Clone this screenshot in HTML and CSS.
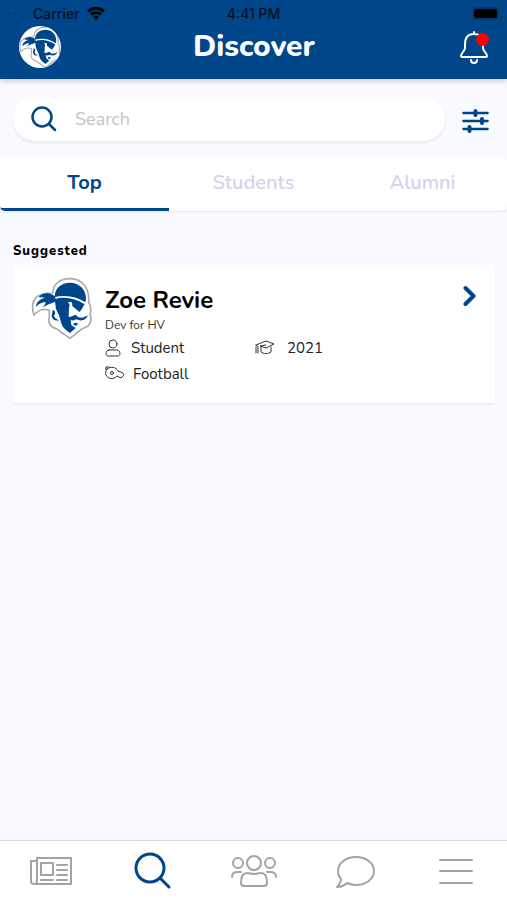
FILE: index.html
```
<!DOCTYPE html>
<html lang="en">
<head>
    <meta charset="UTF-8">
    <meta name="viewport" content="width=device-width, initial-scale=1.0">
    <title>Discover</title>
    <link rel="stylesheet" href="styles.css">
</head>
<body>
    <!-- Shared pirate logo -->
    <svg class="sprite" aria-hidden="true">
        <symbol id="pirate" viewBox="4 4 184 186">
            <path d="M12 118C4 96 8 76 16 68C26 54 50 52 68 52C70 24 92 8 122 9C154 10 174 32 176 66L176 80C184 92 184 104 180 116C186 132 182 148 168 154C156 158 146 166 138 174L120 188L100 174C90 168 86 162 76 158C58 154 54 136 58 124L58 104C40 98 24 104 12 118Z" fill="#fff" stroke="#a5abae" stroke-width="5"/>
            <path d="M74 64C74 37 94 21 120 21C148 21 168 42 168 68C168 72 167 76 166 80C138 62 108 57 74 64Z"/>
            <path d="M74 71C104 61 136 68 164 86L160 91C158 98 154 103 148 109L127 91L126 80L114 79L119 88L117 97L116 122L122 132L124 148L137 157L120 172C108 164 98 156 95 146L88 122L78 100Z"/>
            <path d="M75 62C58 49 38 50 26 64L46 66C30 69 18 80 18 94C30 81 40 80 48 80L38 97C52 84 64 86 78 76Z"/>
            <path d="M112 125C126 124 130 118 138 118C146 129 158 129 173 119C170 134 152 138 139 131C130 137 120 135 112 125Z"/>
            <path d="M68 103C76 105 78 114 72 120C74 128 80 130 87 134C73 138 62 127 66 116Z"/>
            <path d="M133 141L145 143L138 151L130 147Z"/>
        </symbol>
    </svg>

    <header class="header">
        <div class="status-bar">
            <div class="carrier">
                <span class="signal"><i></i><i></i><i></i><i></i></span>
                <span>Carrier</span>
                <svg class="wifi" viewBox="0 0 18 13" aria-hidden="true">
                    <path d="M1 4.500C5.500 0 12.500 0 17 4.500M4 7.500C7 5 11 5 14 7.500"/>
                    <path class="wifi-dot" d="M6 10C8 8 10 8 12 10L9 13Z"/>
                </svg>
            </div>
            <span>4:41 PM</span>
            <span class="battery"></span>
        </div>
        <div class="title-bar">
            <a class="logo" href="#" aria-label="Home"><svg><use href="#pirate"/></svg></a>
            <h1>Discover</h1>
            <button class="bell" aria-label="Notifications">
                <svg viewBox="0 0 30 34" aria-hidden="true">
                    <path d="M15 2V4M15 4C9 4 6 8 6 14V18C6 21 2 23 2 26C2 27 3 27 4 27H26C27 27 28 27 28 26C28 23 24 21 24 18V14C24 8 21 4 15 4ZM12 30C12 34 18 34 18 30"/>
                </svg>
                <span class="bell-badge"></span>
            </button>
        </div>
    </header>

    <main class="main">
        <div class="search-row">
            <label class="search-box">
                <svg viewBox="0 0 26 26" aria-hidden="true">
                    <circle cx="11" cy="11" r="9.500"/>
                    <path d="M18 18L24 24"/>
                </svg>
                <input type="text" placeholder="Search" aria-label="Search">
            </label>
            <button class="filter" aria-label="Filters">
                <svg viewBox="0 0 26 24" aria-hidden="true">
                    <path d="M1 4H25M1 12H25M1 20H25"/>
                    <path class="knobs" d="M13 2V6M19.500 10V14M7 18V22"/>
                </svg>
            </button>
        </div>

        <div class="tabs" role="tablist">
            <button class="tab active" role="tab" aria-selected="true">Top</button>
            <button class="tab" role="tab" aria-selected="false">Students</button>
            <button class="tab" role="tab" aria-selected="false">Alumni</button>
        </div>

        <section class="suggested">
            <h2>Suggested</h2>
            <article class="card">
                <svg class="avatar" aria-hidden="true"><use href="#pirate"/></svg>
                <div class="info">
                    <h3>Zoe Revie</h3>
                    <p class="role">Dev for HV</p>
                    <div class="facts">
                        <span class="fact">
                            <svg class="person" viewBox="0 0 16 18" aria-hidden="true">
                                <circle cx="8" cy="5" r="4"/>
                                <path d="M4 11H12C14 11 15 13 15 15C15 16 14 17 13 17H3C2 17 1 16 1 15C1 13 2 11 4 11Z"/>
                            </svg>
                            Student
                        </span>
                        <span class="fact year">
                            <svg viewBox="0 0 20 18" aria-hidden="true">
                                <path d="M1 6L11 2L19 5L11 9L5 7L11 6M1 6L3 8V14M1 8V14M6 8V13C8 15 14 15 16 13V8"/>
                            </svg>
                            2021
                        </span>
                        <span class="fact">
                            <svg viewBox="0 0 20 18" aria-hidden="true">
                                <path d="M2 4C6 1 11 2 13 6L18 8C19 9 19 10 18 11L16 13L12 11C9 15 3 14 1 10C0 8 1 6 2 4ZM1 5V2H4"/>
                                <circle cx="7" cy="8" r="1.500"/>
                            </svg>
                            Football
                        </span>
                    </div>
                </div>
                <a class="chevron" href="#" aria-label="Open profile">
                    <svg viewBox="0 0 14 22" aria-hidden="true"><path d="M2.500 3L10.500 11L2.500 19"/></svg>
                </a>
            </article>
        </section>
    </main>

    <nav class="bottom-nav">
        <a href="#" aria-label="News">
            <svg viewBox="0 0 44 40" aria-hidden="true">
                <path d="M8 7H42V33H5C3 33 2 32 2 30V10H7M8 7V30C8 32 7 33 5 33M12 12H24V24H12ZM28 14H38M28 19H38M28 24H38M12 29H24M28 29H38"/>
            </svg>
        </a>
        <a href="#" class="current" aria-label="Discover">
            <svg viewBox="0 0 44 40" aria-hidden="true">
                <circle cx="20" cy="17" r="14"/>
                <path d="M30 27L39 36"/>
            </svg>
        </a>
        <a href="#" aria-label="Groups">
            <svg class="wide" viewBox="0 0 48 40" aria-hidden="true">
                <circle cx="24" cy="12" r="7"/>
                <circle cx="8" cy="12" r="5"/>
                <circle cx="40" cy="12" r="5"/>
                <path d="M17 22C20 22 21 23 24 23C27 23 28 22 31 22C36 22 37 26 37 32C37 34 36 35 34 35H14C12 35 11 34 11 32C11 26 12 22 17 22ZM2 26C2 22 4 21 7 21H11M46 26C46 22 44 21 41 21H37"/>
            </svg>
        </a>
        <a href="#" aria-label="Messages">
            <svg viewBox="0 0 44 40" aria-hidden="true">
                <path d="M23 6C33 6 41 12 41 20C41 28 33 34 23 34C20 34 17 33 14 32C11 35 8 36 4 36C7 33 8 31 8 28C6 26 5 23 5 20C5 12 13 6 23 6Z"/>
            </svg>
        </a>
        <a href="#" aria-label="Menu">
            <svg viewBox="0 0 44 40" aria-hidden="true">
                <path d="M6 9H38M6 20H38M6 32H38"/>
            </svg>
        </a>
    </nav>
</body>
</html>
```
FILE: styles.css
```
* {
    box-sizing: border-box;
}

body {
    margin: 0;
    min-height: 100vh;
    display: flex;
    flex-direction: column;
    font-family: Nunito, "Noto Sans", sans-serif;
    background-color: #f8faff;
    color: #111;
}

h1, h2, h3, p {
    margin: 0;
}

button {
    border: none;
    background: none;
    padding: 0;
    font-family: inherit;
    cursor: pointer;
}

svg {
    display: block;
    fill: none;
    stroke-linecap: round;
    stroke-linejoin: round;
}

.sprite {
    position: absolute;
    width: 0;
    height: 0;
}

/* Header */
.header {
    background-color: #00468b;
    padding-bottom: 11px;
    box-shadow: 0 2px 6px rgba(0,0,0,0.2);
}

.status-bar {
    display: grid;
    grid-template-columns: 1fr auto 1fr;
    align-items: center;
    height: 26px;
    padding: 0 8px;
    font-family: Inter, sans-serif;
    font-size: 14px;
    font-weight: 500;
    color: #07111f;
}

.carrier {
    display: flex;
    align-items: center;
    gap: 7px;
}

.signal {
    display: flex;
    gap: 2px;
}

.signal i {
    width: 3px;
    height: 3px;
    border-radius: 1px;
    background-color: #063d76;
}

.wifi {
    width: 18px;
    height: 13px;
    stroke: #000;
    stroke-width: 3;
    stroke-linecap: butt;
}

.wifi-dot {
    fill: #000;
    stroke: none;
}

.battery {
    justify-self: end;
    width: 27px;
    height: 13px;
    border: 2px solid #07386b;
    border-radius: 4px;
    background-color: #000;
}

.title-bar {
    display: grid;
    grid-template-columns: 1fr auto 1fr;
    align-items: center;
    padding: 0 18px 0 19px;
}

.logo {
    width: 42px;
    height: 42px;
    border-radius: 50%;
    background-color: #fff;
    overflow: hidden;
}

.logo svg {
    width: 42px;
    height: 42px;
    fill: #00468b;
}

h1 {
    font-size: 30px;
    line-height: 40px;
    font-weight: 800;
    color: #fff;
}

.bell {
    position: relative;
    justify-self: end;
    width: 30px;
    height: 34px;
}

.bell svg {
    width: 30px;
    height: 34px;
    stroke: #fff;
    stroke-width: 2;
}

.bell-badge {
    position: absolute;
    top: 3px;
    right: 0;
    width: 13px;
    height: 13px;
    border-radius: 50%;
    background-color: #f00;
}

/* Search */
.main {
    flex: 1;
    padding-top: 18px;
}

.search-row {
    display: flex;
    align-items: center;
    gap: 17px;
    padding: 0 18px 0 13px;
}

.search-box {
    flex: 1;
    display: flex;
    align-items: center;
    gap: 18px;
    height: 44px;
    padding: 0 18px;
    border-radius: 22px;
    background-color: #fff;
    box-shadow: 0 2px 3px rgba(0,0,0,0.07);
}

.search-box svg {
    width: 26px;
    height: 26px;
    stroke: #00468b;
    stroke-width: 2.5;
}

.search-box input {
    flex: 1;
    min-width: 0;
    border: none;
    outline: none;
    padding: 0;
    font-family: inherit;
    font-size: 18px;
    background: none;
}

.search-box input::placeholder {
    color: #c4c4c4;
}

.filter {
    padding-top: 4px;
}

.filter svg {
    width: 27px;
    height: 24px;
    stroke: #00468b;
    stroke-width: 2.5;
}

.filter .knobs {
    stroke-width: 4;
}

/* Tabs */
.tabs {
    display: flex;
    height: 55px;
    margin-top: 15px;
    border-radius: 5px;
    background-color: #fff;
    box-shadow: 0 1px 2px rgba(0,0,0,0.1);
    overflow: hidden;
}

.tab {
    flex: 1;
    border-bottom: 3px solid transparent;
    border-radius: 0 0 0 4px;
    font-size: 20px;
    font-weight: 600;
    color: #d3d3ee;
}

.tab.active {
    border-bottom-color: #00468b;
    font-weight: 700;
    color: #00468b;
}

/* Suggested */
.suggested {
    padding: 31px 12px 0 13px;
}

h2 {
    font-size: 13px;
    line-height: 18px;
    font-weight: 800;
    letter-spacing: 1px;
    color: #000;
}

.card {
    display: flex;
    align-items: flex-start;
    margin-top: 5px;
    padding: 12px 18px 16px;
    border-radius: 4px;
    background-color: #fff;
    box-shadow: 0 2px 3px rgba(0,0,0,0.06);
}

.avatar {
    width: 62px;
    height: 62px;
    fill: #00468b;
}

.info {
    flex: 1;
    padding: 7px 0 0 12px;
}

h3 {
    font-size: 24px;
    line-height: 33px;
    font-weight: 700;
    color: #000;
}

.role {
    font-size: 12px;
    line-height: 16px;
    color: #333;
}

.facts {
    display: grid;
    grid-template-columns: 150px 1fr;
    margin-top: 2px;
}

.fact {
    display: flex;
    align-items: center;
    gap: 8px;
    font-size: 15px;
    line-height: 26px;
    color: #222;
}

.fact svg {
    width: 20px;
    height: 18px;
    stroke: #333;
}

.fact .person {
    width: 16px;
    margin-right: 2px;
}

.fact.year {
    gap: 12px;
}

.chevron {
    padding-top: 8px;
}

.chevron svg {
    width: 14px;
    height: 22px;
    stroke: #00468b;
    stroke-width: 4;
}

/* Bottom nav */
.bottom-nav {
    display: flex;
    height: 60px;
    border-top: 1px solid #d8d8d8;
    background-color: #fff;
}

.bottom-nav a {
    flex: 1;
    display: flex;
    align-items: center;
    justify-content: center;
}

.bottom-nav svg {
    width: 44px;
    height: 40px;
    stroke: #a3a3a3;
    stroke-width: 2;
}

.bottom-nav .wide {
    width: 48px;
}

.bottom-nav .current svg {
    stroke: #00468b;
    stroke-width: 3;
}
```
